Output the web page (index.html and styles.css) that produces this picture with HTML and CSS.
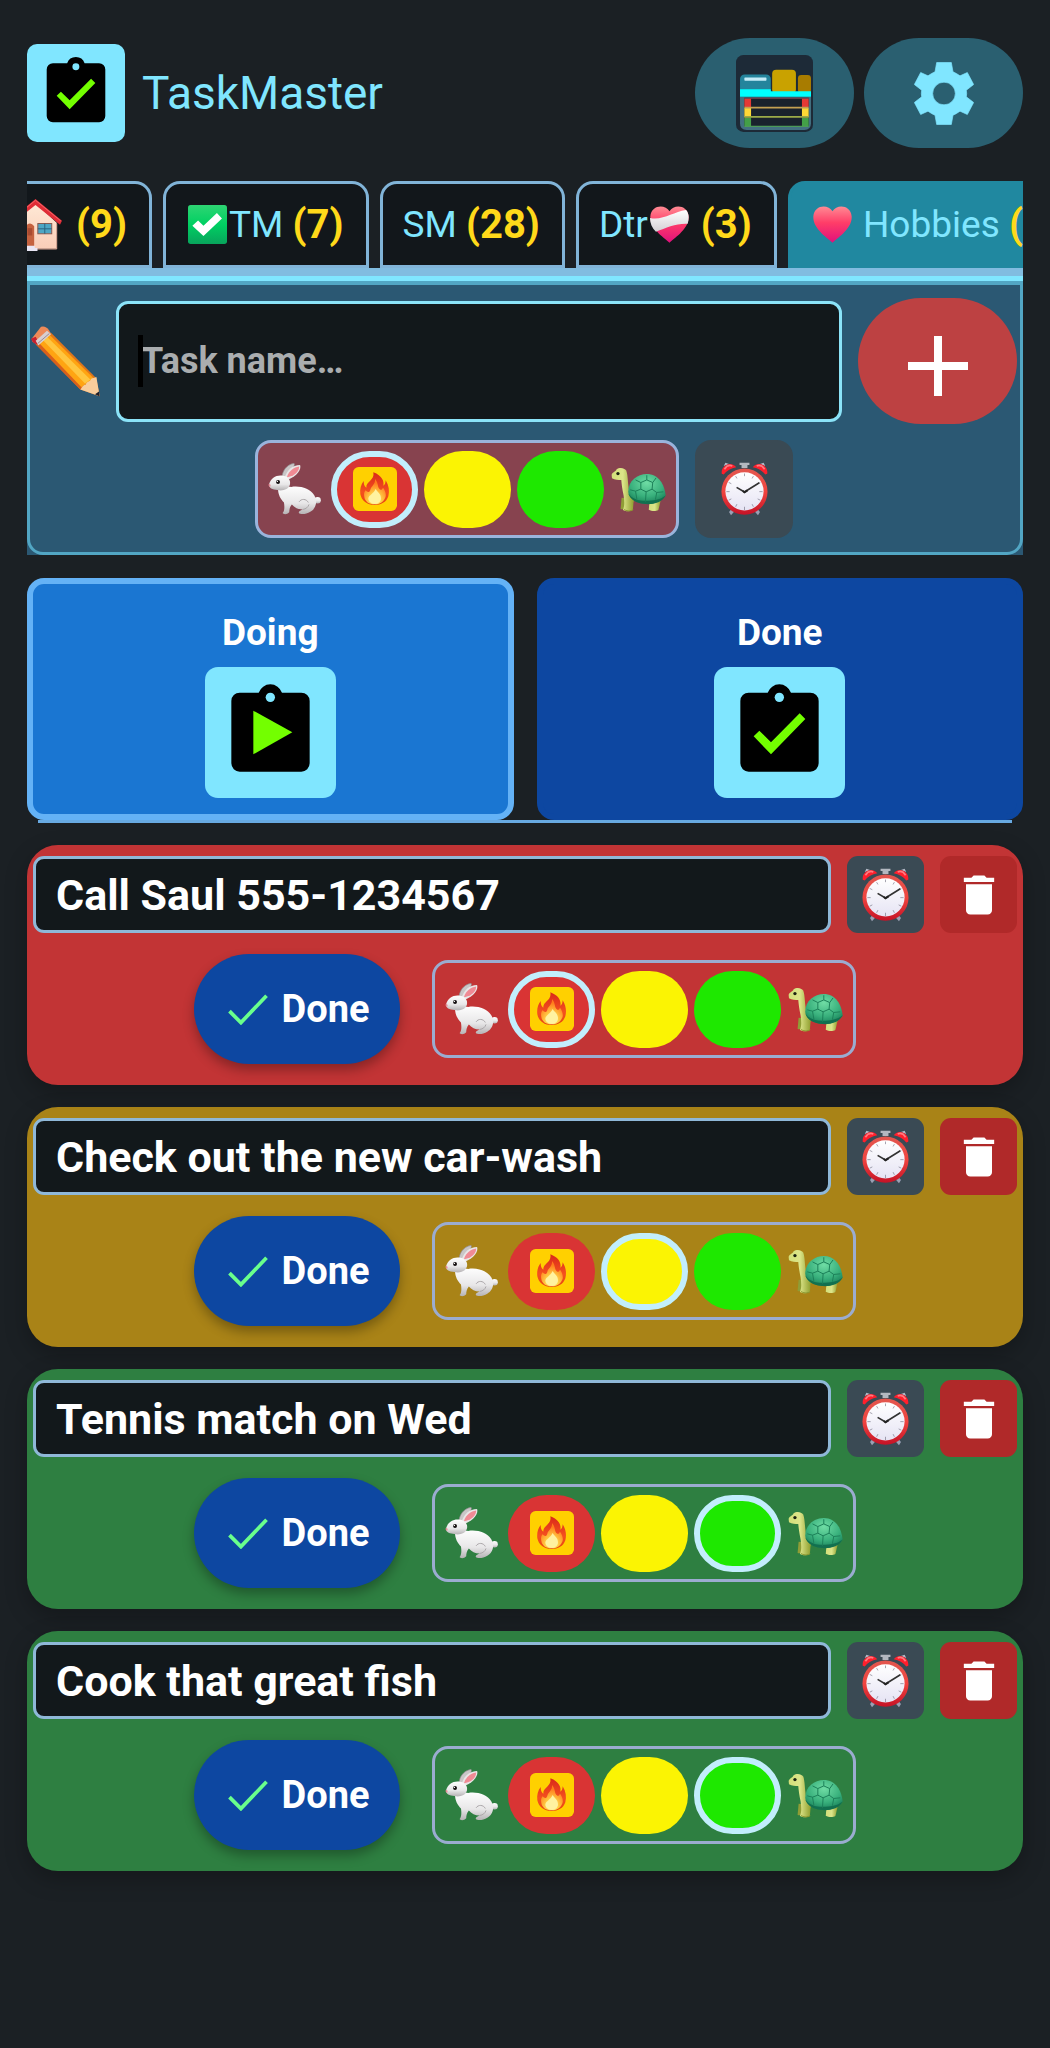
FILE: index.html
```
<!DOCTYPE html>
<html lang="en">
<head>
    <meta charset="UTF-8">
    <meta name="viewport" content="width=device-width, initial-scale=1.0">
    <title>TaskMaster</title>
    <link rel="stylesheet" href="styles.css">
</head>
<body>
    <!-- shared icons -->
    <svg class="sprite" aria-hidden="true">
        <defs>
            <linearGradient id="g-green" x1="0" y1="0" x2="0" y2="1"><stop offset="0" stop-color="#2ed573"/><stop offset=".5" stop-color="#00d062"/><stop offset="1" stop-color="#08a45c"/></linearGradient>
            <linearGradient id="g-heart" x1="0" y1="0" x2="0" y2="1"><stop offset="0" stop-color="#ff8a93"/><stop offset=".45" stop-color="#ff3d68"/><stop offset="1" stop-color="#e0107c"/></linearGradient>
            <linearGradient id="g-band" x1="0" y1="0" x2="0" y2="1"><stop offset="0" stop-color="#fff"/><stop offset="1" stop-color="#d4d0d4"/></linearGradient>
            <linearGradient id="g-fur" x1="0" y1="0" x2="0" y2="1"><stop offset="0" stop-color="#fdfdfd"/><stop offset=".6" stop-color="#e8e7e8"/><stop offset="1" stop-color="#b5b2b4"/></linearGradient>
            <linearGradient id="g-flame" x1="0" y1="0" x2="0" y2="1"><stop offset="0" stop-color="#d9281a"/><stop offset=".6" stop-color="#f4511e"/><stop offset="1" stop-color="#e8450f"/></linearGradient>
            <radialGradient id="g-core" cx=".5" cy=".85" r=".7"><stop offset="0" stop-color="#fffbd0"/><stop offset=".35" stop-color="#ffd84a"/><stop offset="1" stop-color="#ff7a1c"/></radialGradient>
            <radialGradient id="g-shell" cx=".5" cy=".3" r=".75"><stop offset="0" stop-color="#6fdca4"/><stop offset=".6" stop-color="#38b07c"/><stop offset="1" stop-color="#167a55"/></radialGradient>
            <linearGradient id="g-skin" x1="0" y1="0" x2="1" y2="0"><stop offset="0" stop-color="#d3df7a"/><stop offset=".5" stop-color="#dce589"/><stop offset="1" stop-color="#8d9c2c"/></linearGradient>
            <linearGradient id="g-ring" x1="0" y1="0" x2="0" y2="1"><stop offset="0" stop-color="#e2574f"/><stop offset=".5" stop-color="#f0443f"/><stop offset="1" stop-color="#c51226"/></linearGradient>
            <linearGradient id="g-face" x1="0" y1="0" x2="0" y2="1"><stop offset="0" stop-color="#fff"/><stop offset="1" stop-color="#e6e4f4"/></linearGradient>
            <linearGradient id="g-wall" x1="0" y1="0" x2="0" y2="1"><stop offset="0" stop-color="#ffe9d6"/><stop offset="1" stop-color="#f9cdb8"/></linearGradient>
        </defs>

        <symbol id="clipboard" viewBox="0 0 393 393">
            <path d="M104 77H161A37 37 0 0 1 231 77H289A25 25 0 0 1 314 102V289A25 25 0 0 1 289 314H104A25 25 0 0 1 79 289V102A25 25 0 0 1 104 77Z" fill="#000"/>
            <circle cx="196" cy="91" r="14" fill="#80e6ff"/>
        </symbol>
        <symbol id="clipboard-check" viewBox="0 0 393 393">
            <use href="#clipboard"/>
            <path d="M119 208L136 191L171 226L257 139L274 156L171 262Z" fill="#73ff00"/>
        </symbol>
        <symbol id="clipboard-play" viewBox="0 0 393 393">
            <use href="#clipboard"/>
            <path d="M145 131L262 196L145 262Z" fill="#73ff00"/>
        </symbol>

        <symbol id="rabbit" viewBox="0 0 160 158">
            <path d="M42 46C42 26 54 6 78 1C84 4 74 20 60 44Z" fill="#c9c6c7" stroke="#8d8789" stroke-width="2"/>
            <circle cx="150" cy="113" r="10" fill="url(#g-fur)"/>
            <path d="M50 46C56 22 74 6 97 6C102 20 86 40 62 50Z" fill="#e9e6e7"/>
            <path d="M57 43C63 24 78 13 94 11C95 24 82 38 64 42Z" fill="#f08a94"/>
            <path d="M30 78C40 74 60 70 70 73C96 68 128 78 140 98C152 118 144 140 128 148C116 156 98 157 93 152C92 146 100 143 106 141C94 142 80 136 72 126C66 132 64 142 64 150C58 157 46 157 44 152C50 146 50 132 48 120C38 110 30 96 30 78Z" fill="url(#g-fur)"/>
            <path d="M94 118C100 108 116 108 122 120M106 141C114 140 122 134 124 126" fill="none" stroke="#aaa6a8" stroke-width="3"/>
            <path d="M3 64C8 46 24 36 42 38C60 40 70 52 66 66C62 80 44 86 28 82C14 82 0 76 3 64Z" fill="url(#g-fur)"/>
            <path d="M2 64C6 62 10 68 6 72C2 72 0 68 2 64Z" fill="#e8909a"/>
            <circle cx="30" cy="58" r="6" fill="#161112"/>
            <circle cx="28" cy="56" r="2" fill="#fff"/>
        </symbol>

        <symbol id="turtle" viewBox="0 0 166 134">
            <path d="M32 92L29 126C36 128 44 126 46 120L54 94Z" fill="#8f9d36"/>
            <path d="M116 104L114 128C122 133 136 133 143 129L150 100Z" fill="url(#g-skin)"/>
            <path d="M2 24C2 16 14 14 17 6C24 0 40 0 46 10C52 26 50 54 56 74C64 84 74 92 68 106L66 128C58 134 42 134 36 128C42 116 40 100 38 84C34 66 32 50 31 38C22 38 12 38 3 33Z" fill="url(#g-skin)"/>
            <path d="M39 126C44 133 60 133 67 128" fill="none" stroke="#8b972f" stroke-width="3"/>
            <circle cx="21" cy="19" r="5" fill="#1c2311"/>
            <path d="M52 74C52 40 80 20 108 20C144 20 162 52 165 86C150 106 124 112 100 110C80 108 54 98 52 74Z" fill="url(#g-shell)"/>
            <path d="M52 78C64 98 92 104 122 100C144 98 156 92 165 84C154 108 122 114 98 110C78 108 58 98 52 78Z" fill="#12704f"/>
            <path d="M90 46L108 38L126 46L124 66L106 74L90 66ZM90 46L74 38M126 46L136 32M108 38V24M124 66L138 76L134 98M106 74L104 104M90 66L74 72L78 96M74 72L58 68M138 76L158 74" fill="none" stroke="#1c8059" stroke-width="3"/>
        </symbol>

        <symbol id="clock" viewBox="0 0 142 164">
            <path d="M34 140L24 152L30 162L40 150ZM108 140L118 152L112 162L102 150Z" fill="#9aa0b4"/>
            <path d="M8 12L13 2L24 6ZM134 12L129 2L118 6Z" fill="#b6bac8"/>
            <path d="M2 36C-2 12 28 -6 46 16Q22 20 8 38ZM140 36C144 12 114 -6 96 16Q120 20 134 38Z" fill="#ff1f2c"/>
            <path d="M10 22Q20 6 34 12M132 22Q122 6 108 12" stroke="#ff7b80" stroke-width="5" fill="none"/>
            <path d="M56 2H86V9H80V18H62V9H56Z" fill="#b3b8c0"/>
            <circle cx="71" cy="90" r="70" fill="url(#g-ring)"/>
            <circle cx="71" cy="89" r="58" fill="url(#g-face)"/>
            <path d="M71 35V43M71 136V146M16 90H26M116 90H126M44 43L48 50M98 43L94 50M23 62L31 66M119 62L112 66M23 116L31 112M119 116L111 112M44 136L48 128M98 136L94 128" stroke="#777686" stroke-width="2"/>
            <path d="M47 77L71 91M71 91L116 63" stroke="#333" stroke-width="5"/>
            <path d="M66 88L71 92L80 86" stroke="#222" stroke-width="6" fill="none"/>
        </symbol>

        <symbol id="fire" viewBox="0 0 132 132">
            <rect width="132" height="132" rx="17" fill="#ffd000"/>
            <path d="M61 16C88 26 94 44 91 56C96 54 98 46 98 40C108 56 110 72 106 88C100 106 84 114 65 114C42 114 26 102 22 82C20 66 24 52 32 42C32 52 34 58 40 62C38 44 66 40 61 16Z" fill="url(#g-flame)"/>
            <path d="M66 36C78 50 72 62 82 68C86 70 88 66 90 62C96 70 102 84 96 94C90 106 80 112 65 112C48 112 36 104 34 90C32 80 34 74 38 70C44 78 50 76 52 68C54 58 68 52 66 36Z" fill="url(#g-core)"/>
            <path d="M68 66C74 76 84 80 84 94C84 104 76 110 66 110C54 110 46 104 46 94C48 84 62 80 68 66Z" fill="#fff2a0"/>
        </symbol>

        <symbol id="trash" viewBox="0 0 24 24">
            <path d="M6 19C6 20.100 6.900 21 8 21H16C17.100 21 18 20.100 18 19V7H6ZM19 4H15.500L14.500 3H9.500L8.500 4H5V6H19Z" fill="#fff"/>
        </symbol>
        <symbol id="check" viewBox="0 0 118 92">
            <path d="M4 51L38 85L114 5" fill="none" stroke="#69ff8c" stroke-width="11"/>
        </symbol>
    </svg>

    <main class="app">
        <header class="header">
            <svg class="logo tile"><use href="#clipboard-check"/></svg>
            <h1 class="app-name">TaskMaster</h1>
            <button class="header-btn" aria-label="Lists">
                <svg class="lists-icon" viewBox="0 0 230 230">
                    <rect width="230" height="230" rx="22" fill="#1d2a37"/>
                    <rect x="12" y="58" width="92" height="60" rx="14" fill="#24849c"/>
                    <rect x="25" y="67" width="66" height="10" rx="2" fill="#c5ecf8"/>
                    <rect x="108" y="44" width="71" height="70" rx="12" fill="#c9a200"/>
                    <rect x="185" y="60" width="39" height="54" rx="10" fill="#a87c00"/>
                    <path d="M12 124H224V204Q224 224 204 224H32Q12 224 12 204Z" fill="#427080"/>
                    <path d="M25 128H217V214H25Z" fill="#19222c"/>
                    <path d="M25 130H45V156H25ZM197 130H217V156H197Z" fill="#e53935"/>
                    <path d="M25 158H45V186H25ZM197 158H217V186H197Z" fill="#fdd835"/>
                    <path d="M25 188H45V214H25ZM197 188H217V214H197Z" fill="#43a047"/>
                    <path d="M25 129H217" stroke="#7d4a54" stroke-width="3"/>
                    <path d="M25 157H217" stroke="#c3a052" stroke-width="5"/>
                    <path d="M25 185H217" stroke="#9bab48" stroke-width="5"/>
                    <path d="M25 213H217" stroke="#4c9a58" stroke-width="4"/>
                    <path d="M12 102H104V108H224V125H12Z" fill="#00ffff"/>
                </svg>
            </button>
            <button class="header-btn" aria-label="Settings">
                <svg class="gear-icon" viewBox="0 0 180 188">
                    <path fill-rule="evenodd" d="M68 1H112L117 29Q127 33 138 41L160 31L179 67L157 84Q159 94 157 104L179 121L160 157L138 147Q127 155 117 159L112 187H68L63 159Q53 155 42 147L20 157L1 121L23 104Q21 94 23 84L1 67L20 31L42 41Q53 33 63 29ZM90 60A34 34 0 1 0 90 128A34 34 0 1 0 90 60Z" fill="#80e6ff" stroke="#80e6ff" stroke-width="2" stroke-linejoin="round"/>
                </svg>
            </button>
        </header>

        <nav class="tabs">
            <button class="tab"><svg class="house" viewBox="0 0 160 157">
                    <path d="M16 66L80 12L144 72V150H16Z" fill="url(#g-wall)"/>
                    <path d="M144 74V151H60" fill="none" stroke="#d9a594" stroke-width="3"/>
                    <path d="M50 82Q64 66 76 82V146H50Z" fill="#c5623f"/>
                    <path d="M56 88H70V110H56Z" fill="#a84a30"/>
                    <rect x="87" y="74" width="42" height="31" fill="#4ea6c4" stroke="#8a5a50" stroke-width="3"/>
                    <path d="M108 74V105M87 90H129" stroke="#2a6480" stroke-width="3"/>
                    <path d="M38 141H78V148H86V157H30V148H38Z" fill="#e9e6f4"/>
                    <path d="M0 66L80 0L160 66L154 78L80 18L6 78Z" fill="#e02c36"/>
                    <path d="M4 66L80 4L156 66" fill="none" stroke="#f5676a" stroke-width="3"/>
                </svg><b>(9)</b></button>
            <button class="tab"><svg class="emoji" viewBox="0 0 116 116">
                    <rect width="116" height="116" rx="8" fill="url(#g-green)"/>
                    <path d="M13 62L30 46L46 62L86 24L101 40L46 92Z" fill="#fff"/>
                </svg>TM <b>(7)</b></button>
            <button class="tab">SM <b>(28)</b></button>
            <button class="tab">Dtr<svg class="emoji" viewBox="0 0 118 112">
                    <path d="M59 16C72 -6 114 -4 117 32C118 68 80 92 59 111C38 92 0 68 1 32C4 -4 46 -6 59 16Z" fill="url(#g-heart)"/>
                    <path d="M0 36C40 44 70 18 109 12C118 22 119 36 114 54C80 52 50 66 18 78C6 66 0 52 0 36Z" fill="url(#g-band)"/>
                </svg><b> (3)</b></button>
            <button class="tab active"><svg class="emoji" viewBox="0 0 118 112">
                    <path d="M59 16C72 -6 114 -4 117 32C118 68 80 92 59 111C38 92 0 68 1 32C4 -4 46 -6 59 16Z" fill="url(#g-heart)"/>
                </svg> Hobbies <b>(4)</b></button>
        </nav>

        <form class="new-task">
            <div class="new-task-frame">
                <div class="new-task-row">
                    <svg class="pencil" viewBox="0 0 207 212">
                        <path d="M14 54L60 20L196 156L206 210L148 190Z" fill="#e0761a"/>
                        <path d="M22 50L54 24L188 156L146 186Z" fill="#ffa412"/>
                        <path d="M36 42L48 32L178 160L162 172Z" fill="#ffc640"/>
                        <path d="M14 54L22 48L152 184L148 190Z" fill="#d9601c"/>
                        <path d="M148 190C154 184 156 176 164 176C166 166 176 166 178 162C182 154 192 156 196 152L206 210Z" fill="#f8cd9c"/>
                        <path d="M192 204L204 196L206 211Z" fill="#1e1e28"/>
                        <path d="M2 38L30 2Q44 -2 54 12L60 22L18 56L4 46Z" fill="#ee8a58"/>
                        <path d="M0 38L14 32L24 50L18 56L6 48Z" fill="#c8202e"/>
                        <path d="M14 44L48 14L60 24L22 58Z" fill="#d8cfd0"/>
                        <path d="M20 52L55 22" stroke="#9c8b90" stroke-width="3"/>
                    </svg>
                    <div class="name-field">
                        <span class="caret"></span>
                        <input type="text" class="name-input" placeholder="Task name…" aria-label="Task name">
                    </div>
                    <button type="button" class="add-btn" aria-label="Add task">
                        <svg class="plus" viewBox="0 0 60 70"><path d="M30 10V70M0 40H60" stroke="#fff" stroke-width="8"/></svg>
                    </button>
                </div>
                <div class="new-task-row centered">
                    <div class="priority tinted" role="radiogroup" aria-label="Priority">
                        <svg class="rabbit"><use href="#rabbit"/></svg>
                        <label class="level"><input type="radio" name="p0" class="high" aria-label="High" checked><svg class="fire"><use href="#fire"/></svg></label>
                        <label class="level"><input type="radio" name="p0" class="medium" aria-label="Medium"></label>
                        <label class="level"><input type="radio" name="p0" class="low" aria-label="Low"></label>
                        <svg class="turtle"><use href="#turtle"/></svg>
                    </div>
                    <button type="button" class="icon-btn large" aria-label="Reminder"><svg class="clock"><use href="#clock"/></svg></button>
                </div>
            </div>
        </form>

        <div class="views">
            <button class="view selected">Doing<svg class="view-icon tile"><use href="#clipboard-play"/></svg></button>
            <button class="view">Done<svg class="view-icon tile"><use href="#clipboard-check"/></svg></button>
        </div>

        <section class="tasks">
            <article class="task red">
                <div class="task-top">
                    <input type="text" class="task-name" value="Call Saul 555-1234567" aria-label="Task">
                    <button class="icon-btn" aria-label="Reminder"><svg class="clock"><use href="#clock"/></svg></button>
                    <button class="icon-btn delete" aria-label="Delete"><svg class="trash"><use href="#trash"/></svg></button>
                </div>
                <div class="task-bottom">
                    <button class="done-btn"><svg class="check"><use href="#check"/></svg>Done</button>
                    <div class="priority" role="radiogroup" aria-label="Priority">
                        <svg class="rabbit"><use href="#rabbit"/></svg>
                        <label class="level"><input type="radio" name="p1" class="high" aria-label="High" checked><svg class="fire"><use href="#fire"/></svg></label>
                        <label class="level"><input type="radio" name="p1" class="medium" aria-label="Medium"></label>
                        <label class="level"><input type="radio" name="p1" class="low" aria-label="Low"></label>
                        <svg class="turtle"><use href="#turtle"/></svg>
                    </div>
                </div>
            </article>

            <article class="task yellow">
                <div class="task-top">
                    <input type="text" class="task-name" value="Check out the new car-wash" aria-label="Task">
                    <button class="icon-btn" aria-label="Reminder"><svg class="clock"><use href="#clock"/></svg></button>
                    <button class="icon-btn delete" aria-label="Delete"><svg class="trash"><use href="#trash"/></svg></button>
                </div>
                <div class="task-bottom">
                    <button class="done-btn"><svg class="check"><use href="#check"/></svg>Done</button>
                    <div class="priority" role="radiogroup" aria-label="Priority">
                        <svg class="rabbit"><use href="#rabbit"/></svg>
                        <label class="level"><input type="radio" name="p2" class="high" aria-label="High"><svg class="fire"><use href="#fire"/></svg></label>
                        <label class="level"><input type="radio" name="p2" class="medium" aria-label="Medium" checked></label>
                        <label class="level"><input type="radio" name="p2" class="low" aria-label="Low"></label>
                        <svg class="turtle"><use href="#turtle"/></svg>
                    </div>
                </div>
            </article>

            <article class="task green">
                <div class="task-top">
                    <input type="text" class="task-name" value="Tennis match on Wed" aria-label="Task">
                    <button class="icon-btn" aria-label="Reminder"><svg class="clock"><use href="#clock"/></svg></button>
                    <button class="icon-btn delete" aria-label="Delete"><svg class="trash"><use href="#trash"/></svg></button>
                </div>
                <div class="task-bottom">
                    <button class="done-btn"><svg class="check"><use href="#check"/></svg>Done</button>
                    <div class="priority" role="radiogroup" aria-label="Priority">
                        <svg class="rabbit"><use href="#rabbit"/></svg>
                        <label class="level"><input type="radio" name="p3" class="high" aria-label="High"><svg class="fire"><use href="#fire"/></svg></label>
                        <label class="level"><input type="radio" name="p3" class="medium" aria-label="Medium"></label>
                        <label class="level"><input type="radio" name="p3" class="low" aria-label="Low" checked></label>
                        <svg class="turtle"><use href="#turtle"/></svg>
                    </div>
                </div>
            </article>

            <article class="task green">
                <div class="task-top">
                    <input type="text" class="task-name" value="Cook that great fish" aria-label="Task">
                    <button class="icon-btn" aria-label="Reminder"><svg class="clock"><use href="#clock"/></svg></button>
                    <button class="icon-btn delete" aria-label="Delete"><svg class="trash"><use href="#trash"/></svg></button>
                </div>
                <div class="task-bottom">
                    <button class="done-btn"><svg class="check"><use href="#check"/></svg>Done</button>
                    <div class="priority" role="radiogroup" aria-label="Priority">
                        <svg class="rabbit"><use href="#rabbit"/></svg>
                        <label class="level"><input type="radio" name="p4" class="high" aria-label="High"><svg class="fire"><use href="#fire"/></svg></label>
                        <label class="level"><input type="radio" name="p4" class="medium" aria-label="Medium"></label>
                        <label class="level"><input type="radio" name="p4" class="low" aria-label="Low" checked></label>
                        <svg class="turtle"><use href="#turtle"/></svg>
                    </div>
                </div>
            </article>
        </section>
    </main>
</body>
</html>
```
FILE: styles.css
```
* {
    box-sizing: border-box;
}
body {
    margin: 0;
    background-color: #1b2024;
    color: #fff;
    font-family: Roboto, sans-serif;
}
button, input {
    font-family: inherit;
    color: inherit;
    margin: 0;
}
button {
    border: none;
    padding: 0;
    cursor: pointer;
}
svg {
    display: block;
    flex-shrink: 0;
}
.sprite {
    position: absolute;
    width: 0;
    height: 0;
}
.app {
    padding: 38px 27px 0;
}
.tile {
    background-color: #80e6ff;
}

/* header */
.header {
    display: flex;
    align-items: center;
    gap: 10px;
    margin-bottom: 33px;
}
.logo {
    width: 98px;
    height: 98px;
    border-radius: 10px;
}
.app-name {
    flex: 1;
    margin: 0;
    padding-left: 7px;
    font-size: 46px;
    line-height: 52px;
    font-weight: 400;
    color: #80e6ff;
}
.header-btn {
    display: flex;
    align-items: center;
    justify-content: center;
    width: 159px;
    height: 110px;
    border-radius: 55px;
    background-color: #2a5f70;
}
.lists-icon {
    width: 77px;
    height: 77px;
}
.gear-icon {
    width: 60px;
    height: 63px;
}

/* tabs */
.tabs {
    display: flex;
    gap: 11px;
    overflow: hidden;
    border-bottom: 8px solid #81bce0;
}
.tab {
    display: flex;
    align-items: center;
    flex-shrink: 0;
    height: 87px;
    padding: 0 22px 0 20px;
    border: 3px solid #81b4d8;
    border-radius: 17px 17px 0 0;
    background-color: #12171b;
    color: #80e6ff;
    font-size: 37px;
    line-height: 44px;
    white-space: pre;
}
.tab:first-child {
    margin-left: -41px;
}
.tab b {
    color: #ffd91a;
    font-size: 40px;
}
.tab.active {
    background-color: #2088a0;
    border-color: #2088a0;
}
.emoji {
    width: 39px;
    height: 39px;
    margin: 0 2px;
}
.house {
    width: 53px;
    height: 52px;
    margin-right: 14px;
}

/* new task form */
.new-task {
    border-top: 5px solid #80e6ff;
    background-color: #2b5873;
    margin-bottom: 23px;
}
.new-task-frame {
    display: flex;
    flex-direction: column;
    gap: 16px;
    padding: 13px 3px 14px 1px;
    border: 3px solid #52a6c4;
    border-top-width: 4px;
    border-radius: 0 0 16px 16px;
}
.new-task-row {
    display: flex;
    align-items: center;
    gap: 16px;
}
.new-task-row.centered {
    justify-content: center;
}
.pencil {
    width: 69px;
    height: 71px;
}
.name-field {
    flex: 1;
    position: relative;
}
.name-input {
    display: block;
    width: 100%;
    height: 121px;
    padding: 0 20px 0 22px;
    border: 3px solid #8be3f8;
    border-radius: 12px;
    background-color: #12181b;
    font-size: 36px;
    font-weight: 700;
}
.name-input::placeholder {
    color: #aaadaf;
    opacity: 1;
}
.caret {
    position: absolute;
    left: 22px;
    top: 34px;
    width: 5px;
    height: 52px;
    background-color: #000;
}
.add-btn {
    display: flex;
    align-items: center;
    justify-content: center;
    width: 159px;
    height: 126px;
    border-radius: 63px;
    background-color: #bd4142;
}
.plus {
    width: 60px;
    height: 70px;
}

/* priority picker */
.priority {
    display: flex;
    align-items: center;
    gap: 6px;
    width: 424px;
    height: 98px;
    border: 3px solid #9bacd0;
    border-radius: 16px;
}
.priority.tinted {
    background-color: #87434f;
    border-color: #9ab4dc;
}
.rabbit {
    width: 53px;
    height: 52px;
    margin: 0 4px 0 10px;
}
.turtle {
    width: 55px;
    height: 45px;
    margin-left: 1px;
}
.level {
    position: relative;
    display: flex;
    align-items: center;
    justify-content: center;
    width: 87px;
    height: 77px;
}
.level input {
    position: absolute;
    inset: 0;
    appearance: none;
    border-radius: 39px;
}
.level input:checked {
    border: 6px solid #c2eefc;
}
.level .high {
    background-color: #d93434;
}
.level .medium {
    background-color: #fbf403;
}
.level .low {
    background-color: #1ee800;
}
.fire {
    position: relative;
    width: 44px;
    height: 44px;
    pointer-events: none;
}

.icon-btn {
    display: flex;
    align-items: center;
    justify-content: center;
    flex-shrink: 0;
    width: 77px;
    height: 77px;
    border-radius: 11px;
    background-color: #3a4a54;
}
.icon-btn.large {
    width: 98px;
    height: 98px;
    border-radius: 16px;
}
.icon-btn.delete {
    background-color: #b02929;
}
.clock {
    width: 47px;
    height: 54px;
}
.trash {
    width: 52px;
    height: 52px;
}

/* doing / done switch */
.views {
    position: relative;
    display: flex;
    gap: 23px;
    padding-bottom: 3px;
    margin-bottom: 22px;
}
.views::after {
    content: "";
    position: absolute;
    left: 11px;
    right: 11px;
    bottom: 0;
    height: 3px;
    background-color: #68aae2;
}
.view {
    flex: 1;
    display: flex;
    flex-direction: column;
    align-items: center;
    gap: 12px;
    padding: 27px 0 16px;
    border: 6px solid #0d47a1;
    border-radius: 17px;
    background-color: #0d47a1;
    font-size: 37px;
    line-height: 44px;
    font-weight: 700;
}
.view.selected {
    border-color: #64b2f6;
    background-color: #1a76d2;
}
.view-icon {
    width: 131px;
    height: 131px;
    border-radius: 13px;
}

/* task cards */
.tasks {
    display: flex;
    flex-direction: column;
    gap: 22px;
    padding-bottom: 40px;
}
.task {
    padding: 11px 6px 21px;
    border-radius: 31px;
    box-shadow: 0 8px 22px rgba(0, 0, 0, 0.25);
}
.task.red {
    background-color: #c23435;
}
.task.yellow {
    background-color: #a98317;
}
.task.green {
    background-color: #2e7f41;
}
.task-top {
    display: flex;
    gap: 16px;
    margin-bottom: 21px;
}
.task-name {
    flex: 1;
    min-width: 0;
    height: 77px;
    padding: 0 20px;
    border: 3px solid #8fb8d8;
    border-radius: 11px;
    background-color: #12181b;
    font-size: 43px;
    font-weight: 700;
}
.task-bottom {
    display: flex;
    align-items: center;
    justify-content: center;
    gap: 32px;
}
.done-btn {
    display: flex;
    align-items: center;
    justify-content: center;
    gap: 14px;
    width: 206px;
    height: 110px;
    padding-left: 3px;
    border-radius: 55px;
    background-color: #0d47a1;
    box-shadow: 0 6px 12px rgba(0, 0, 0, 0.3);
    font-size: 38px;
    font-weight: 700;
}
.check {
    width: 40px;
    height: 31px;
}
```
